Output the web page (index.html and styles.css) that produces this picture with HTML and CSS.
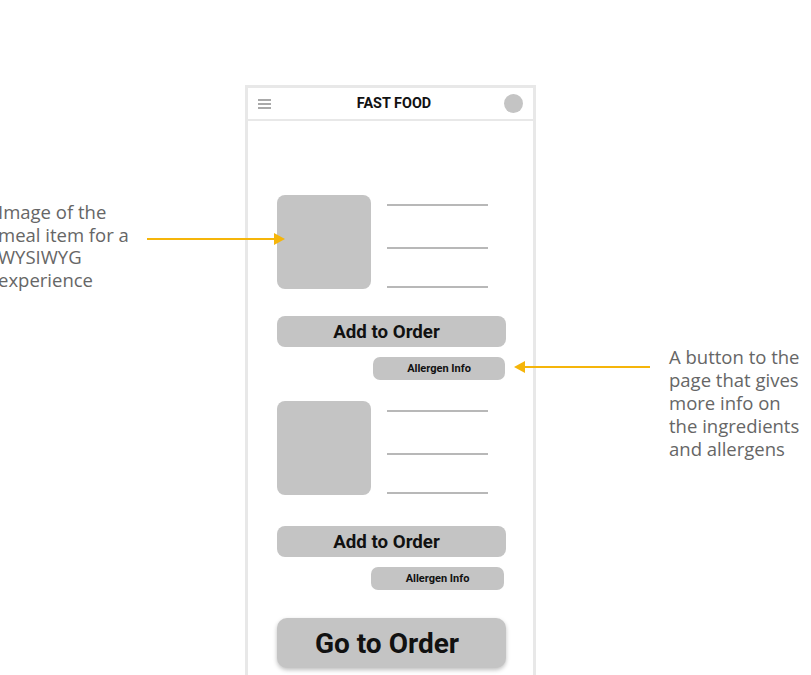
FILE: index.html
```html
<!DOCTYPE html>
<html lang="en">
<head>
    <meta charset="UTF-8">
    <meta name="viewport" content="width=device-width, initial-scale=1.0">
    <title>Fast Food Wireframe</title>
    <link rel="stylesheet" href="styles.css">
</head>
<body>
    <div class="note note-left">Image of the<br>meal item for a<br>WYSIWYG<br>experience</div>
    <div class="arrow arrow-right"></div>
    <div class="note note-right">A button to the<br>page that gives<br>more info on<br>the ingredients<br>and allergens</div>
    <div class="arrow arrow-left"></div>

    <div class="phone">
        <div class="topbar">
            <svg class="menu" width="13" height="10" viewBox="0 0 13 10">
                <path d="M0 1h13M0 5h13M0 9h13" stroke="#555" stroke-width="1.2"/>
            </svg>
            <span class="title">FAST FOOD</span>
            <span class="avatar"></span>
        </div>

        <div class="content">
            <div class="item first">
                <div class="thumb"></div>
                <div class="lines">
                    <span class="line l1"></span>
                    <span class="line l2"></span>
                    <span class="line l3"></span>
                </div>
            </div>
            <button class="add">Add to Order</button>
            <button class="allergen">Allergen Info</button>

            <div class="item second">
                <div class="thumb"></div>
                <div class="lines">
                    <span class="line l1"></span>
                    <span class="line l2"></span>
                    <span class="line l3"></span>
                </div>
            </div>
            <button class="add add-two">Add to Order</button>
            <button class="allergen allergen-two">Allergen Info</button>

            <button class="go">Go to Order</button>
        </div>
    </div>
</body>
</html>
```

FILE: styles.css
```css
body {
    margin: 0;
    background-color: #fff;
    font-family: Roboto, "Liberation Sans", sans-serif;
    position: relative;
    height: 675px;
    overflow: hidden;
}

/* annotations */
.note {
    position: absolute;
    font-family: "Open Sans", sans-serif;
    color: #666;
    font-size: 18.5px;
    white-space: nowrap;
}
.note-left {
    left: -2px;
    top: 201px;
    line-height: 22.5px;
}
.note-right {
    left: 669px;
    top: 345px;
    line-height: 23px;
}
.arrow {
    position: absolute;
    height: 2px;
    background-color: #f5b50a;
}
.arrow::after {
    content: "";
    position: absolute;
    top: -5px;
    border-top: 6px solid transparent;
    border-bottom: 6px solid transparent;
}
.arrow-right {
    left: 147px;
    top: 238px;
    width: 128px;
}
.arrow-right::after {
    right: -10px;
    border-left: 11px solid #f5b50a;
}
.arrow-left {
    left: 524px;
    top: 366px;
    width: 126px;
}
.arrow-left::after {
    left: -10px;
    border-right: 11px solid #f5b50a;
}

/* phone frame */
.phone {
    margin: 85px 0 0 245px;
    width: 285px;
    height: 620px;
    border: 3px solid #e8e8e8;
    border-bottom: none;
    background-color: #fff;
}
.topbar {
    height: 31px;
    border-bottom: 2px solid #e8e8e8;
    display: flex;
    align-items: center;
    justify-content: space-between;
    padding: 0 10px 0 10px;
}
.menu {
    display: block;
}
.title {
    font-weight: 700;
    font-size: 14.4px;
    color: #111;
    margin-left: 13px;
}
.avatar {
    width: 19px;
    height: 19px;
    border-radius: 50%;
    background-color: #c4c4c4;
}

.content {
    padding: 74px 27px 0 29px;
    display: flex;
    flex-direction: column;
    align-items: flex-start;
}
.item {
    display: flex;
}
.thumb {
    width: 94px;
    height: 94px;
    border-radius: 8px;
    background-color: #c4c4c4;
}
.lines {
    margin-left: 16px;
    width: 101px;
}
.line {
    display: block;
    height: 2px;
    background-color: #b8b8b8;
}
.l1 { margin-top: 9px; }
.l2 { margin-top: 41px; }
.l3 { margin-top: 37px; }

button {
    border: none;
    background-color: #c4c4c4;
    color: #111;
    font-family: Roboto, "Liberation Sans", sans-serif;
    font-weight: 700;
    cursor: pointer;
    padding: 0;
}
.add {
    margin-top: 27px;
    width: 229px;
    height: 31px;
    border-radius: 8px;
    font-size: 18.7px;
    padding-right: 10px;
}
.add-two {
    margin-top: 31px;
}
.allergen {
    margin-top: 10px;
    align-self: flex-end;
    margin-right: 1px;
    width: 132px;
    height: 23px;
    border-radius: 7px;
    font-size: 11px;
}
.allergen-two {
    margin-right: 2px;
    width: 133px;
}
.item.second {
    margin-top: 21px;
}
.go {
    margin-top: 28px;
    width: 229px;
    height: 50px;
    border-radius: 10px;
    font-size: 28px;
    padding-right: 9px;
    box-shadow: 0 2px 4px rgba(0, 0, 0, 0.25);
}
```
